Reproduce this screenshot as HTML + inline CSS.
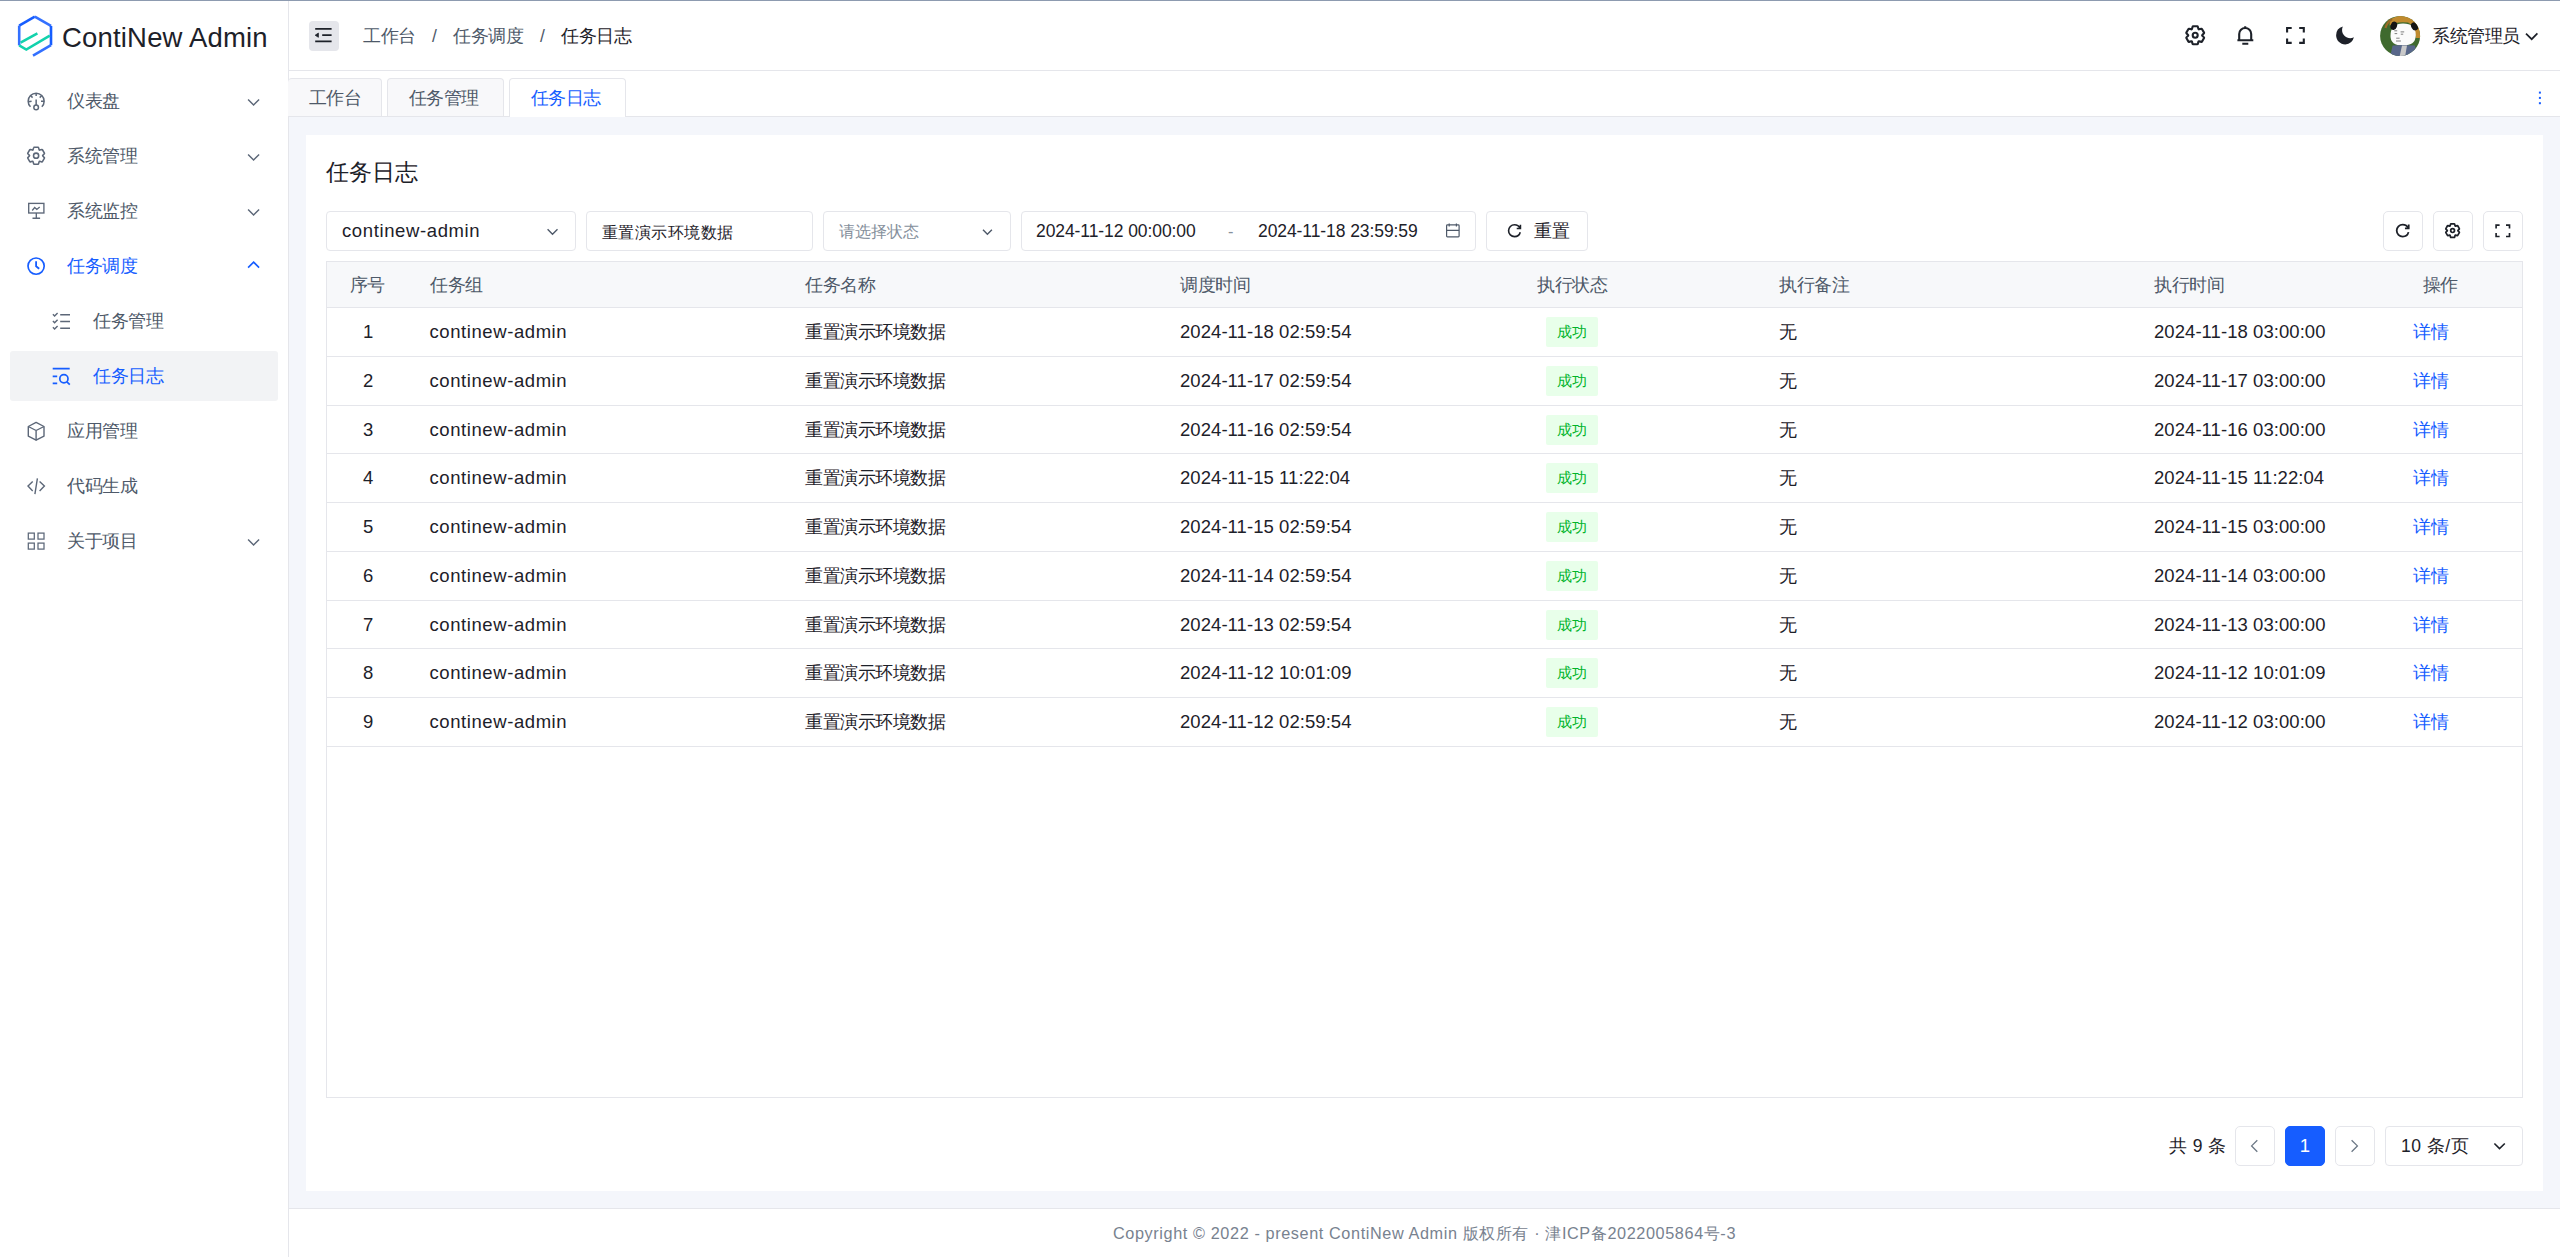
<!DOCTYPE html>
<html><head><meta charset="utf-8">
<style>
*{box-sizing:border-box;margin:0;padding:0}
html,body{width:2560px;height:1257px;overflow:hidden;background:#fff}
body{position:relative;font-family:"Liberation Sans",sans-serif;font-size:17.5px;color:#1d2129}
.abs{position:absolute}
.nw{white-space:nowrap}
#topline{left:0;top:0;width:2560px;height:1px;background:#8d9bb0}
#sider{left:0;top:1px;width:289px;height:1256px;background:#fff;border-right:1px solid #e5e6eb}
#header{left:289px;top:1px;width:2271px;height:70px;background:#fff;border-bottom:1px solid #e5e6eb}
#tabs{left:289px;top:71px;width:2271px;height:46px;background:#fff;border-bottom:1px solid #e5e6eb}
#main{left:289px;top:117px;width:2271px;height:1091px;background:#f4f6fb}
#card{left:306px;top:135px;width:2237px;height:1056px;background:#fff}
#footer{left:289px;top:1208px;width:2271px;height:49px;background:#fff;border-top:1px solid #e5e6eb}
.mi{position:absolute;left:10px;width:268px;height:50px;border-radius:3px;color:#4e5969}
.mi .t{position:absolute;left:57px;top:0;line-height:50px;white-space:nowrap;letter-spacing:-0.5px}
.mi.sub .t{left:83px}
.mi.act{color:#165dff}
.mi.sel{background:#f2f3f5;color:#165dff}
.tab{position:absolute;top:7px;height:38px;background:#f8f8fa;border:1px solid #e5e6eb;border-bottom:none;border-radius:4px 4px 0 0;color:#4e5969;line-height:38px;text-align:center;white-space:nowrap;letter-spacing:-0.5px}
.tab.on{background:#fff;color:#165dff;height:40px}
.inp{position:absolute;top:211px;height:40px;border:1px solid #e5e6eb;border-radius:4px;background:#fff;white-space:nowrap;line-height:38px}
.ibtn{position:absolute;top:211px;width:40px;height:40px;border:1px solid #e5e6eb;border-radius:5px;background:#fff}
.th{position:absolute;top:262px;height:46px;line-height:46px;color:#4e5969;white-space:nowrap;letter-spacing:-0.5px}
.row{position:absolute;left:326px;width:2197px;height:49px;border-bottom:1px solid #e5e6eb}
.c{position:absolute;top:1px;line-height:48px;white-space:nowrap;color:#1d2129}
.cj{letter-spacing:-0.5px}
.tag{position:absolute;top:10px;left:1220px;width:52px;height:30px;background:#e8ffea;color:#00b42a;font-size:15px;line-height:30px;text-align:center;border-radius:2px}
.lnk{color:#165dff}
.pg{position:absolute;top:1126px;height:40px;border:1px solid #e5e6eb;border-radius:5px;background:#fff}
</style></head>
<body>
<div id="topline" class="abs"></div>
<div id="sider" class="abs">
  <div class="abs nw" style="left:62px;top:19px;font-size:27.5px;line-height:36px;letter-spacing:0.18px;color:#1d2129">ContiNew Admin</div>
  <div class="mi" style="top:75px"><span class="t">仪表盘</span></div>
  <div class="mi" style="top:130px"><span class="t">系统管理</span></div>
  <div class="mi" style="top:185px"><span class="t">系统监控</span></div>
  <div class="mi act" style="top:240px"><span class="t">任务调度</span></div>
  <div class="mi sub" style="top:295px"><span class="t">任务管理</span></div>
  <div class="mi sub sel" style="top:350px"><span class="t">任务日志</span></div>
  <div class="mi" style="top:405px"><span class="t">应用管理</span></div>
  <div class="mi" style="top:460px"><span class="t">代码生成</span></div>
  <div class="mi" style="top:515px"><span class="t">关于项目</span></div>
</div>
<div id="header" class="abs">
  <div class="abs" style="left:20px;top:20px;width:30px;height:30px;border-radius:4px;background:#e5e6eb"></div>
  <div class="abs nw" style="left:74px;top:22px;line-height:26px;color:#4e5969;letter-spacing:-0.5px">工作台</div>
  <div class="abs nw" style="left:143px;top:22px;line-height:26px;color:#4e5969">/</div>
  <div class="abs nw" style="left:164px;top:22px;line-height:26px;color:#4e5969;letter-spacing:-0.5px">任务调度</div>
  <div class="abs nw" style="left:251px;top:22px;line-height:26px;color:#4e5969">/</div>
  <div class="abs nw" style="left:272px;top:22px;line-height:26px;color:#1d2129;letter-spacing:-0.5px">任务日志</div>
  <div class="abs nw" style="left:2143px;top:22px;line-height:26px;color:#1d2129;letter-spacing:-0.5px">系统管理员</div>
</div>
<div id="tabs" class="abs">
  <div class="tab" style="left:-1px;width:94px;border-left:none;padding-left:1px">工作台</div>
  <div class="tab" style="left:98px;width:117px;padding-right:4px">任务管理</div>
  <div class="tab on" style="left:220px;width:117px;padding-right:4px">任务日志</div>
</div>
<div id="main" class="abs"></div>
<div id="card" class="abs"></div>
<div class="abs nw" style="left:326px;top:157px;font-size:22.5px;line-height:32px;color:#1d2129">任务日志</div>
<div class="inp" style="left:326px;width:250px"><span class="abs nw lat" style="left:15px;top:0;font-size:18.5px;letter-spacing:0.62px">continew-admin</span></div>
<div class="inp" style="left:586px;width:227px"><span class="abs nw" style="left:15px;top:1px;font-size:16.25px;letter-spacing:0.45px">重置演示环境数据</span></div>
<div class="inp" style="left:823px;width:188px"><span class="abs nw" style="left:15px;top:0;font-size:16.25px;color:#86909c">请选择状态</span></div>
<div class="inp" style="left:1021px;width:455px"><span class="abs nw" style="left:14px;top:0;font-size:17.5px;letter-spacing:-0.08px">2024-11-12 00:00:00</span><span class="abs nw" style="left:206px;top:0;font-size:16.25px;color:#86909c">-</span><span class="abs nw" style="left:236px;top:0;font-size:17.5px;letter-spacing:-0.08px">2024-11-18 23:59:59</span></div>
<div class="inp" style="left:1486px;width:102px"><span class="abs nw" style="left:47px;top:0;font-size:17.5px;letter-spacing:-0.5px">重置</span></div>
<div class="ibtn" style="left:2383px"></div>
<div class="ibtn" style="left:2433px"></div>
<div class="ibtn" style="left:2483px"></div>
<div class="abs" style="left:326px;top:261px;width:2197px;height:837px;border:1px solid #e5e6eb;border-top:none"></div>
<div class="abs" style="left:326px;top:261px;width:2197px;height:47px;background:#f7f8fa;border:1px solid #e5e6eb"></div>
<div class="th" style="left:349.5px">序号</div>
<div class="th" style="left:430px">任务组</div>
<div class="th" style="left:805px">任务名称</div>
<div class="th" style="left:1180px">调度时间</div>
<div class="th" style="left:1537px">执行状态</div>
<div class="th" style="left:1779px">执行备注</div>
<div class="th" style="left:2154px">执行时间</div>
<div class="th" style="left:2422.5px">操作</div>
<div class="row" style="top:307px;height:50px"><span class="c" style="left:36.9px;font-size:18.5px">1</span><span class="c" style="left:103.5px;font-size:18.5px;letter-spacing:0.58px">continew-admin</span><span class="c cj" style="left:479px">重置演示环境数据</span><span class="c" style="left:854px;font-size:18.5px;letter-spacing:0.06px">2024-11-18 02:59:54</span><span class="tag">成功</span><span class="c" style="left:1453px">无</span><span class="c" style="left:1828px;font-size:18.5px;letter-spacing:0.06px">2024-11-18 03:00:00</span><span class="c lnk cj" style="left:2087px">详情</span></div>
<div class="row" style="top:356px;height:50px"><span class="c" style="left:36.9px;font-size:18.5px">2</span><span class="c" style="left:103.5px;font-size:18.5px;letter-spacing:0.58px">continew-admin</span><span class="c cj" style="left:479px">重置演示环境数据</span><span class="c" style="left:854px;font-size:18.5px;letter-spacing:0.06px">2024-11-17 02:59:54</span><span class="tag">成功</span><span class="c" style="left:1453px">无</span><span class="c" style="left:1828px;font-size:18.5px;letter-spacing:0.06px">2024-11-17 03:00:00</span><span class="c lnk cj" style="left:2087px">详情</span></div>
<div class="row" style="top:405px;height:49px"><span class="c" style="left:36.9px;font-size:18.5px">3</span><span class="c" style="left:103.5px;font-size:18.5px;letter-spacing:0.58px">continew-admin</span><span class="c cj" style="left:479px">重置演示环境数据</span><span class="c" style="left:854px;font-size:18.5px;letter-spacing:0.06px">2024-11-16 02:59:54</span><span class="tag">成功</span><span class="c" style="left:1453px">无</span><span class="c" style="left:1828px;font-size:18.5px;letter-spacing:0.06px">2024-11-16 03:00:00</span><span class="c lnk cj" style="left:2087px">详情</span></div>
<div class="row" style="top:453px;height:50px"><span class="c" style="left:36.9px;font-size:18.5px">4</span><span class="c" style="left:103.5px;font-size:18.5px;letter-spacing:0.58px">continew-admin</span><span class="c cj" style="left:479px">重置演示环境数据</span><span class="c" style="left:854px;font-size:18.5px;letter-spacing:0.06px">2024-11-15 11:22:04</span><span class="tag">成功</span><span class="c" style="left:1453px">无</span><span class="c" style="left:1828px;font-size:18.5px;letter-spacing:0.06px">2024-11-15 11:22:04</span><span class="c lnk cj" style="left:2087px">详情</span></div>
<div class="row" style="top:502px;height:50px"><span class="c" style="left:36.9px;font-size:18.5px">5</span><span class="c" style="left:103.5px;font-size:18.5px;letter-spacing:0.58px">continew-admin</span><span class="c cj" style="left:479px">重置演示环境数据</span><span class="c" style="left:854px;font-size:18.5px;letter-spacing:0.06px">2024-11-15 02:59:54</span><span class="tag">成功</span><span class="c" style="left:1453px">无</span><span class="c" style="left:1828px;font-size:18.5px;letter-spacing:0.06px">2024-11-15 03:00:00</span><span class="c lnk cj" style="left:2087px">详情</span></div>
<div class="row" style="top:551px;height:50px"><span class="c" style="left:36.9px;font-size:18.5px">6</span><span class="c" style="left:103.5px;font-size:18.5px;letter-spacing:0.58px">continew-admin</span><span class="c cj" style="left:479px">重置演示环境数据</span><span class="c" style="left:854px;font-size:18.5px;letter-spacing:0.06px">2024-11-14 02:59:54</span><span class="tag">成功</span><span class="c" style="left:1453px">无</span><span class="c" style="left:1828px;font-size:18.5px;letter-spacing:0.06px">2024-11-14 03:00:00</span><span class="c lnk cj" style="left:2087px">详情</span></div>
<div class="row" style="top:600px;height:49px"><span class="c" style="left:36.9px;font-size:18.5px">7</span><span class="c" style="left:103.5px;font-size:18.5px;letter-spacing:0.58px">continew-admin</span><span class="c cj" style="left:479px">重置演示环境数据</span><span class="c" style="left:854px;font-size:18.5px;letter-spacing:0.06px">2024-11-13 02:59:54</span><span class="tag">成功</span><span class="c" style="left:1453px">无</span><span class="c" style="left:1828px;font-size:18.5px;letter-spacing:0.06px">2024-11-13 03:00:00</span><span class="c lnk cj" style="left:2087px">详情</span></div>
<div class="row" style="top:648px;height:50px"><span class="c" style="left:36.9px;font-size:18.5px">8</span><span class="c" style="left:103.5px;font-size:18.5px;letter-spacing:0.58px">continew-admin</span><span class="c cj" style="left:479px">重置演示环境数据</span><span class="c" style="left:854px;font-size:18.5px;letter-spacing:0.06px">2024-11-12 10:01:09</span><span class="tag">成功</span><span class="c" style="left:1453px">无</span><span class="c" style="left:1828px;font-size:18.5px;letter-spacing:0.06px">2024-11-12 10:01:09</span><span class="c lnk cj" style="left:2087px">详情</span></div>
<div class="row" style="top:697px;height:50px"><span class="c" style="left:36.9px;font-size:18.5px">9</span><span class="c" style="left:103.5px;font-size:18.5px;letter-spacing:0.58px">continew-admin</span><span class="c cj" style="left:479px">重置演示环境数据</span><span class="c" style="left:854px;font-size:18.5px;letter-spacing:0.06px">2024-11-12 02:59:54</span><span class="tag">成功</span><span class="c" style="left:1453px">无</span><span class="c" style="left:1828px;font-size:18.5px;letter-spacing:0.06px">2024-11-12 03:00:00</span><span class="c lnk cj" style="left:2087px">详情</span></div>
<div class="abs nw" style="left:2169px;top:1133px;line-height:26px;font-size:17.5px;letter-spacing:0.4px">共 9 条</div>
<div class="pg" style="left:2235px;width:40px"></div>
<div class="pg" style="left:2285px;width:40px;background:#165dff;border-color:#165dff;color:#fff;text-align:center;line-height:38px;font-size:18.5px">1</div>
<div class="pg" style="left:2335px;width:40px"></div>
<div class="pg" style="left:2385px;width:138px;border-radius:4px"><span class="abs nw" style="left:15px;top:0;line-height:38px;font-size:17.5px;letter-spacing:0.5px">10 条/页</span></div>
<div id="footer" class="abs"><div class="abs nw" style="left:0;width:2271px;top:12px;line-height:24px;text-align:center;color:#78828f;font-size:16.25px;letter-spacing:0.6px">Copyright © 2022 - present ContiNew Admin 版权所有 · 津ICP备2022005864号-3</div></div>
<svg class="abs" style="left:0;top:0;pointer-events:none" width="2560" height="1257" viewBox="0 0 2560 1257" fill="none" stroke-linecap="butt" stroke-linejoin="miter">
<!-- logo -->
<g stroke-width="2.6" fill="none">
  <path d="M34.8 16.6 L19.2 25.6" stroke="#165dff"/>
  <path d="M34.8 16.6 L51 25.9" stroke="#3370ff"/>
  <path d="M19.2 25.6 V45.4" stroke="#3370ff"/>
  <path d="M51 25.9 V45.2" stroke="#165dff"/>
  <path d="M51 45.2 L33 55.6" stroke="#3370ff"/>
  <path d="M19.2 45.4 L26.3 49.6 L49.8 35.6" stroke="#12d2ac"/>
  <path d="M20.6 42.6 L37.4 33.4" stroke="#12d2ac"/>
</g>
<!-- sidebar icons -->
<g stroke="#5c6778" stroke-width="1.6">
  <!-- dashboard -->
  <g stroke-width="1.5">
  <path d="M30.5 106.8 A8 8 0 1 1 41.8 106.8"/>
  <path d="M36.15 93.1 V96.1 M30.5 95.5 L32.6 97.6 M41.8 95.5 L39.7 97.6 M28.2 101.8 L31.6 101.3 M41 101.3 H44.1 M36.15 99.4 V105"/>
  <circle cx="36.15" cy="107.4" r="2.3"/>
  </g>
  <!-- settings -->
  <g transform="translate(36.1 155.7) scale(0.47) translate(-24 -24)" stroke-width="3.3">
   <path d="M18.797 6.732A1 1 0 0 1 19.76 6h8.48a1 1 0 0 1 .964.732l1.285 4.628a1 1 0 0 0 1.213.7l4.651-1.2a1 1 0 0 1 1.116.468l4.24 7.344a1 1 0 0 1-.153 1.2L38.193 23.3a1 1 0 0 0 0 1.402l3.364 3.427a1 1 0 0 1 .153 1.2l-4.24 7.344a1 1 0 0 1-1.116.468l-4.65-1.2a1 1 0 0 0-1.214.7l-1.285 4.628a1 1 0 0 1-.964.732h-8.48a1 1 0 0 1-.963-.732L17.51 36.64a1 1 0 0 0-1.213-.7l-4.65 1.2a1 1 0 0 1-1.116-.468l-4.24-7.344a1 1 0 0 1 .153-1.2L9.809 24.7a1 1 0 0 0 0-1.402l-3.364-3.427a1 1 0 0 1-.153-1.2l4.24-7.344a1 1 0 0 1 1.116-.468l4.65 1.2a1 1 0 0 0 1.214-.7l1.285-4.628Z"/>
   <circle cx="24" cy="24" r="5.5"/>
  </g>
  <!-- monitor -->
  <g stroke-width="1.35">
   <rect x="28.7" y="203.4" width="15.2" height="9.6"/>
   <path d="M36.3 213 V218.2 M32.5 218.2 H40.1"/>
   <path d="M32.2 210.5 L34.7 207.5 L36.8 209.4 L39.7 206.9"/>
  </g>
  <!-- cube -->
  <g stroke-width="1.4" stroke-linejoin="round">
   <path d="M36.1 422.4 L44 426.5 V436.2 L36.1 440.2 L28.3 436.2 V426.5 Z"/>
   <path d="M28.3 426.5 L36.1 430.5 L44 426.5 M36.1 430.5 V440.2"/>
  </g>
  <!-- code -->
  <g stroke-width="1.4">
   <path d="M32.7 481.4 L28 486.1 L32.7 490.9 M39.6 481.4 L44.4 486.1 L39.6 490.9 M37.4 478.4 L34.9 494.1"/>
  </g>
  <!-- apps -->
  <g stroke-width="1.25">
   <rect x="28.3" y="533.1" width="6" height="6"/>
   <rect x="38" y="533.1" width="6" height="6"/>
   <rect x="28.3" y="543.1" width="6" height="6"/>
   <rect x="38" y="543.1" width="6" height="6"/>
  </g>
  <!-- checklist -->
  <g stroke-width="1.4">
   <path d="M52.9 314.3 L54.6 316 L57.6 313 M52.9 321 L54.6 322.7 L57.6 319.7 M52.9 327.2 L54.6 328.9 L57.6 325.9"/>
   <path d="M60.2 314.8 H70 M60.2 321.5 H70 M60.2 328.2 H70"/>
  </g>
  <!-- chevrons -->
  <g stroke-width="1.45">
   <path d="M248.1 99.4 L253.6 104.9 L259.1 99.4"/>
   <path d="M248.1 154.4 L253.6 159.9 L259.1 154.4"/>
   <path d="M248.1 209.4 L253.6 214.9 L259.1 209.4"/>
   <path d="M248.1 539.4 L253.6 544.9 L259.1 539.4"/>
  </g>
</g>
<g stroke="#165dff" stroke-width="1.9">
  <circle cx="36.1" cy="266.1" r="8.1" stroke-width="1.65"/>
  <path d="M36.1 261.2 V266.3 L39.2 268.8" stroke-width="1.8"/>
  <path d="M248.1 267.6 L253.6 262.1 L259.1 267.6" stroke-width="1.6"/>
  <!-- search list -->
  <g stroke-width="1.7">
   <path d="M52.7 368.6 H69.7 M52.7 376.4 H57.2 M52.7 383.4 H57.2"/>
   <circle cx="63.9" cy="378.8" r="4.1"/>
   <path d="M66.9 381.8 L69.8 384.6"/>
  </g>
</g>
<!-- header collapse icon -->
<g stroke="#1d2129" stroke-width="1.8">
  <path d="M315.2 28.9 H331.6 M322.2 35.2 H331.6 M315.2 41.4 H331.6"/>
  <path d="M315.2 35.2 L318.4 33.1 V37.3 Z" fill="#1d2129" stroke-width="0.8"/>
</g>
<!-- header right icons -->
<g stroke="#1d2129" stroke-width="2.1">
  <g transform="translate(2195.2 35.3) scale(0.5) translate(-24 -24)" stroke-width="4.2">
   <path d="M18.797 6.732A1 1 0 0 1 19.76 6h8.48a1 1 0 0 1 .964.732l1.285 4.628a1 1 0 0 0 1.213.7l4.651-1.2a1 1 0 0 1 1.116.468l4.24 7.344a1 1 0 0 1-.153 1.2L38.193 23.3a1 1 0 0 0 0 1.402l3.364 3.427a1 1 0 0 1 .153 1.2l-4.24 7.344a1 1 0 0 1-1.116.468l-4.65-1.2a1 1 0 0 0-1.214.7l-1.285 4.628a1 1 0 0 1-.964.732h-8.48a1 1 0 0 1-.963-.732L17.51 36.64a1 1 0 0 0-1.213-.7l-4.65 1.2a1 1 0 0 1-1.116-.468l-4.24-7.344a1 1 0 0 1 .153-1.2L9.809 24.7a1 1 0 0 0 0-1.402l-3.364-3.427a1 1 0 0 1-.153-1.2l4.24-7.344a1 1 0 0 1 1.116-.468l4.65 1.2a1 1 0 0 0 1.214-.7l1.285-4.628Z"/>
   <circle cx="24" cy="24" r="5"/>
  </g>
  <path d="M2239.2 40.2 V34 A6 6 0 0 1 2251.2 34 V40.2 M2237.4 40.2 H2253.3 M2245.2 28 V26.2 M2242.3 43.7 H2248.3"/>
  <path d="M2287.1 32.5 V28 H2291.7 M2299.2 28 H2303.8 V32.5 M2303.8 38.4 V42.9 H2299.2 M2291.7 42.9 H2287.1 V38.4"/>
  <g transform="translate(2333.7 23.7) scale(0.482)" stroke="none" fill="#1d2129">
   <path d="M41.91 28.363c-.33.17-.665.325-1.006.466a17.064 17.064 0 0 1-6.444 1.258C25.007 30.087 17.35 22.53 17.35 13.2c0-2.248.44-4.39 1.237-6.352l.021-.046c.144-.343.294-.677.46-1.005A19.193 19.193 0 0 0 5 24.035C5 34.581 13.53 43 24.051 43a19.197 19.197 0 0 0 17.859-14.637Z"/>
  </g>
  <path d="M2526 33.6 L2531.7 39.2 L2537.4 33.4" stroke-width="1.7"/>
</g>
<!-- avatar -->
<defs><clipPath id="av"><circle cx="2400.1" cy="35.9" r="20"/></clipPath></defs>
<g clip-path="url(#av)" stroke="none">
  <rect x="2378" y="14" width="45" height="45" fill="#3f6a2e"/>
  <path d="M2390 19.5 Q2402 12.5 2414 16.5 Q2421.5 23 2421.5 38 L2415.8 38 Q2415 25 2408 22.5 Q2397 21 2389.5 25.5 Z" fill="#c08a2e"/><path d="M2385.5 28 Q2387 22 2392 19" stroke="#9a6a25" stroke-width="2.2" fill="none"/>
  <path d="M2390.5 36 Q2390.5 23.5 2403 23.5 Q2415.8 23.5 2415.8 35 Q2415.8 45.5 2403 45.5 Q2390.5 45.5 2390.5 36 Z" fill="#fbfbfb"/>
  <ellipse cx="2393.8" cy="25.8" rx="3.2" ry="4.2" fill="#141414" transform="rotate(20 2393.8 25.8)"/>
  <ellipse cx="2414.5" cy="26.4" rx="3.2" ry="4.3" fill="#141414" transform="rotate(-30 2414.5 26.4)"/>
  <path d="M2390 57 L2392.6 45.5 Q2403 44.5 2414.8 45.5 L2418 57 Z" fill="#58678a"/>
  <path d="M2399.5 57 L2402 45.5 L2407 45.5 L2405 57 Z" fill="#c9c9c9"/>
  <path d="M2394.3 30.8 h2.9 M2400.6 31.9 h3.6 M2394.6 33.6 h2.6 M2400.8 34.2 h2.4 M2396.2 38.2 h3.4 M2396 41 h4.9" stroke="#707070" stroke-width="0.9"/>
</g>
<!-- tabs more dots -->
<g fill="#165dff">
  <rect x="2538.9" y="91.6" width="2" height="2"/>
  <rect x="2538.9" y="96.9" width="2" height="2"/>
  <rect x="2538.9" y="102.2" width="2" height="2"/>
</g>

<!-- filter icons -->
<g stroke="#4e5969" stroke-width="1.4">
  <path d="M547.6 229.3 L552.5 234.2 L557.5 229.3"/>
  <path d="M983 229.7 L987.4 234.2 L991.9 229.7"/>
  <rect x="1446.6" y="224.9" width="12.5" height="12" rx="0.8" stroke-width="1.2"/>
  <path d="M1446.6 230.3 H1459.1 M1449.2 223.6 V226.4 M1456.4 223.6 V226.4" stroke-width="1.2"/>
  <path d="M2251.6 1140.2 L2257.3 1145.9 L2251.6 1151.7" transform="translate(4508.9 0) scale(-1 1)" stroke="#6b7785" stroke-width="1.3"/>
  <path d="M2351.6 1140.2 L2357.4 1145.9 L2351.6 1151.7" stroke="#6b7785" stroke-width="1.3"/>
  <path d="M2494.4 1143.5 L2499.5 1148.6 L2504.8 1143.5" stroke="#1d2129" stroke-width="1.6"/>
</g>
<g stroke="#1d2129" fill="none">
  <g transform="translate(1514.5 230.7) scale(0.37) translate(-24 -24)" stroke-width="4.4">
    <path d="M38.837 18C36.463 12.136 30.715 8 24 8 15.163 8 8 15.163 8 24s7.163 16 16 16c7.455 0 13.72-5.1 15.496-12M40 8v10H30"/>
  </g>
  <g transform="translate(2402.7 230.6) scale(0.375) translate(-24 -24)" stroke-width="4.8">
    <path d="M38.837 18C36.463 12.136 30.715 8 24 8 15.163 8 8 15.163 8 24s7.163 16 16 16c7.455 0 13.72-5.1 15.496-12M40 8v10H30"/>
  </g>
  <g transform="translate(2452.6 230.6) scale(0.38) translate(-24 -24)" stroke-width="4.6">
   <path d="M18.797 6.732A1 1 0 0 1 19.76 6h8.48a1 1 0 0 1 .964.732l1.285 4.628a1 1 0 0 0 1.213.7l4.651-1.2a1 1 0 0 1 1.116.468l4.24 7.344a1 1 0 0 1-.153 1.2L38.193 23.3a1 1 0 0 0 0 1.402l3.364 3.427a1 1 0 0 1 .153 1.2l-4.24 7.344a1 1 0 0 1-1.116.468l-4.65-1.2a1 1 0 0 0-1.214.7l-1.285 4.628a1 1 0 0 1-.964.732h-8.48a1 1 0 0 1-.963-.732L17.51 36.64a1 1 0 0 0-1.213-.7l-4.65 1.2a1 1 0 0 1-1.116-.468l-4.24-7.344a1 1 0 0 1 .153-1.2L9.809 24.7a1 1 0 0 0 0-1.402l-3.364-3.427a1 1 0 0 1-.153-1.2l4.24-7.344a1 1 0 0 1 1.116-.468l4.65 1.2a1 1 0 0 0 1.214-.7l1.285-4.628Z"/>
   <circle cx="24" cy="24" r="5"/>
  </g>
  <path d="M2496.1 228.6 V225.1 H2499.6 M2506 225.1 H2509.5 V228.6 M2509.5 233 V236.5 H2506 M2499.6 236.5 H2496.1 V233" stroke-width="1.65"/>
</g>
</svg>
</body></html>
